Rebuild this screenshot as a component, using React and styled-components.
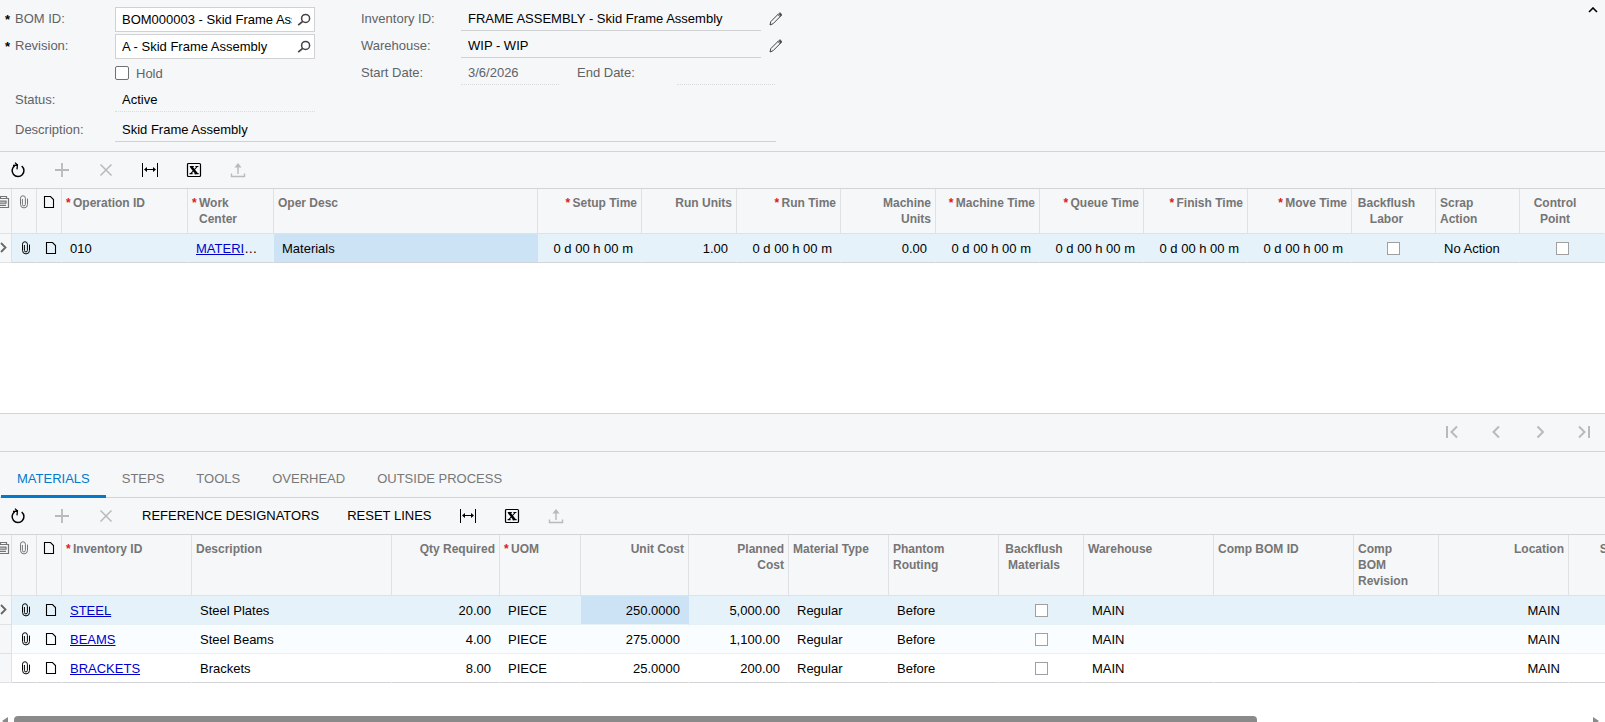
import styled, { createGlobalStyle, css } from 'styled-components'

const GlobalStyle = createGlobalStyle`
  * {
    box-sizing: border-box;
  }
  body {
    margin: 0;
    background: #fff;
    color: #000;
    font-family: "Liberation Sans", Arial, sans-serif;
    font-size: 13px;
  }
  button, input {
    font: inherit;
  }
`

const operationColumns = [
  { key: 'operation', label: 'Operation ID', width: 126, required: true },
  { key: 'workCenter', label: 'Work\nCenter', width: 86, required: true, link: true },
  { key: 'desc', label: 'Oper Desc', width: 264 },
  { key: 'setup', label: 'Setup Time', width: 104, required: true, align: 'right' },
  { key: 'runUnits', label: 'Run Units', width: 95, align: 'right' },
  { key: 'run', label: 'Run Time', width: 104, required: true, align: 'right' },
  { key: 'machineUnits', label: 'Machine\nUnits', width: 95, align: 'right' },
  { key: 'machine', label: 'Machine Time', width: 104, required: true, align: 'right' },
  { key: 'queue', label: 'Queue Time', width: 104, required: true, align: 'right' },
  { key: 'finish', label: 'Finish Time', width: 104, required: true, align: 'right' },
  { key: 'move', label: 'Move Time', width: 104, required: true, align: 'right' },
  { key: 'backflush', label: 'Backflush\nLabor', width: 84, align: 'center', check: true },
  { key: 'scrap', label: 'Scrap\nAction', width: 84 },
  { key: 'control', label: 'Control\nPoint', align: 'center', check: true },
]

const time = '0 d 00 h 00 m'

const operations = [
  {
    operation: '010', workCenter: 'MATERIALS', desc: 'Materials', setup: time, runUnits: '1.00', run: time,
    machineUnits: '0.00', machine: time, queue: time, finish: time, move: time, scrap: 'No Action',
  },
]

const materialColumns = [
  { key: 'inventory', label: 'Inventory ID', width: 130, required: true, link: true },
  { key: 'desc', label: 'Description', width: 200 },
  { key: 'qty', label: 'Qty Required', width: 108, align: 'right' },
  { key: 'uom', label: 'UOM', width: 81, required: true },
  { key: 'unitCost', label: 'Unit Cost', width: 108, align: 'right' },
  { key: 'plannedCost', label: 'Planned\nCost', width: 100, align: 'right' },
  { key: 'type', label: 'Material Type', width: 100 },
  { key: 'phantom', label: 'Phantom\nRouting', width: 110 },
  { key: 'backflush', label: 'Backflush\nMaterials', width: 85, align: 'center', check: true },
  { key: 'warehouse', label: 'Warehouse', width: 130 },
  { key: 'compBom', label: 'Comp BOM ID', width: 140 },
  { key: 'compRev', label: 'Comp\nBOM\nRevision', width: 85 },
  { key: 'location', label: 'Location', width: 130, align: 'right' },
  { key: 'scrapFactor', label: 'Scrap Factor', align: 'right' },
]

const common = { uom: 'PIECE', type: 'Regular', phantom: 'Before', warehouse: 'MAIN', location: 'MAIN' }

const materials = [
  { ...common, inventory: 'STEEL', desc: 'Steel Plates', qty: '20.00', unitCost: '250.0000', plannedCost: '5,000.00' },
  { ...common, inventory: 'BEAMS', desc: 'Steel Beams', qty: '4.00', unitCost: '275.0000', plannedCost: '1,100.00' },
  { ...common, inventory: 'BRACKETS', desc: 'Brackets', qty: '8.00', unitCost: '25.0000', plannedCost: '200.00' },
]

const tabs = ['MATERIALS', 'STEPS', 'TOOLS', 'OVERHEAD', 'OUTSIDE PROCESS']

/* icons */

const Svg = styled.svg`
  display: block;
  flex: none;
  fill: none;
  stroke: currentColor;
`

const SearchIcon = () => (
  <Svg width="14" height="14" viewBox="0 0 14 14" strokeWidth="1.5">
    <circle cx="8.6" cy="5.4" r="4" />
    <path d="M5.7 8.3L1.2 12.2" strokeWidth="1.7" />
  </Svg>
)

const PencilIcon = () => (
  <Svg width="14" height="14" viewBox="0 0 14 14" strokeWidth="1">
    <path d="M1 13l.8-3.4 7.9-7.9c.8-.8 1.7-.8 2.3-.2s.6 1.6-.2 2.4l-7.7 7.8zM9 2.6l2.3 2.3" />
    <path d="M10.4 1.6l2 2" strokeWidth="1.6" />
  </Svg>
)

const RefreshIcon = () => (
  <Svg width="16" height="16" viewBox="0 0 16 16" strokeWidth="1.5">
    <path d="M11.7 4A5.9 5.9 0 1 1 4.6 3.8" />
    <path d="M3 3.4l4.4-.2-.4 4.2M5 .6l2.6 2.6" strokeWidth="1.3" />
  </Svg>
)

const PlusIcon = () => (
  <Svg width="16" height="16" viewBox="0 0 16 16" strokeWidth="1.8">
    <path d="M8 1v14M1 8h14" />
  </Svg>
)

const CrossIcon = () => (
  <Svg width="16" height="16" viewBox="0 0 16 16" strokeWidth="1.5">
    <path d="M2.5 2.5l11 11M13.5 2.5l-11 11" />
  </Svg>
)

const FitIcon = () => (
  <Svg width="18" height="16" viewBox="0 0 18 16" strokeWidth="1">
    <path d="M1.5 1v14M16.5 1v14M4 7.5h10" />
    <path d="M3 7.5l3-2.5v5zM15 7.5l-3-2.5v5z" fill="currentColor" stroke="none" />
  </Svg>
)

const ExcelIcon = () => (
  <Svg width="16" height="16" viewBox="0 0 16 16" strokeWidth="1.2">
    <rect x="1.5" y="1.5" width="13" height="13" rx="1" />
    <path d="M5 4.5l5.6 7.2" strokeWidth="2.6" />
    <path d="M11.2 4.5l-6.4 7.2M3.8 4.5h4M9.4 4.5h3M3.6 11.6h3M8.6 11.6h4" strokeWidth="1.1" />
  </Svg>
)

const UploadIcon = () => (
  <Svg width="16" height="16" viewBox="0 0 16 16" strokeWidth="1.4">
    <path d="M1.5 11.5v3h13v-3M8 12V3" />
    <path d="M4.4 5.4L8 1l3.6 4.4z" fill="currentColor" stroke="none" />
  </Svg>
)

const ClipIcon = () => (
  <Svg width="10" height="14" viewBox="0 0 10 14" strokeWidth="1">
    <path d="M3.4 4v5.4a1.5 1.5 0 0 0 3 0V3.2a2.4 2.4 0 0 0-4.9 0v6.2a3.5 3.5 0 0 0 7 0V3.6" />
  </Svg>
)

const NoteIcon = () => (
  <Svg width="12" height="14" viewBox="0 0 12 14" strokeWidth="1.1">
    <path d="M1.5 1.5h6l3 3v8h-9z" />
  </Svg>
)

const SettingsIcon = () => (
  <Svg width="12" height="14" viewBox="0 0 12 14" strokeWidth="1.2">
    <path d="M0 3.5h2.5v-2h6v2h2v9H0M2.5 3.5h6M2 6.2h6v2H2M2 10.4h6" />
  </Svg>
)

const Chevron = ({ d, size = 16, weight = 2 }) => (
  <Svg width={size} height="16" viewBox={`0 0 ${size} 16`} strokeWidth={weight}>
    <path d={d} />
  </Svg>
)

/* form */

const Page = styled.div`
  display: flex;
  flex-direction: column;
  height: 100vh;
  overflow: hidden;
`

const Form = styled.form`
  display: flex;
  justify-content: space-between;
  flex: none;
  padding: 7px 2px 9px 5px;
  background: #f5f7f9;
  border-bottom: 1px solid #d2d4d7;
`

const FormBody = styled.div`
  display: flex;
  flex-direction: column;
  gap: 6px;
`

const FormColumns = styled.div`
  display: flex;
  gap: 46px;
`

const FormColumn = styled.div`
  display: flex;
  flex-direction: column;
  gap: 3px;
`

const FormRow = styled.div`
  display: grid;
  grid-template-columns: ${(p) => p.$columns || '110px 200px'};
  height: 24px;
`

const Label = styled.label`
  padding-left: ${(p) => (p.$indent ? 10 : 0)}px;
  line-height: 24px;
  color: #5f6368;
  white-space: nowrap;
`

const RequiredLabel = styled(Label)`
  display: grid;
  grid-template-columns: 10px auto;

  &::before {
    content: '*';
    padding-top: 1px;
    color: #000;
    font-weight: bold;
  }
`

const Lookup = styled.div`
  display: flex;
  align-items: center;
  gap: 2px;
  background: #fff;
  border: 1px solid #cfd1d3;
`

const LookupInput = styled.input`
  flex: 1;
  min-width: 0;
  height: 22px;
  padding: 0 0 0 6px;
  border: 0;
  outline: 0;
  background: none;
`

const IconButton = styled.button`
  display: flex;
  align-items: center;
  justify-content: center;
  width: ${(p) => p.$width || 20}px;
  padding: 0;
  border: 0;
  background: none;
  color: ${(p) => (p.$dark ? '#000' : '#444')};
`

const LineInput = styled.input`
  width: 100%;
  min-width: 0;
  height: 24px;
  padding: 0 7px;
  border: 0;
  border-bottom: 1px ${(p) => (p.$dotted ? 'dotted #d9dbde' : 'solid #cfd1d3')};
  outline: 0;
  background: none;
  color: ${(p) => (p.$muted ? '#5f6368' : '#000')};
`

const Check = styled.input.attrs({ type: 'checkbox' })`
  appearance: none;
  display: block;
  width: ${(p) => (p.$large ? 14 : 13)}px;
  height: ${(p) => (p.$large ? 14 : 13)}px;
  margin: ${(p) => (p.$large ? '0' : '0 auto')};
  background: #fff;
  border: 1px solid ${(p) => (p.$large ? '#707070' : '#a0a0a0')};
  border-radius: ${(p) => (p.$large ? 2 : 0)}px;
`

const Hold = styled.label`
  display: flex;
  align-items: center;
  grid-column: 2;
  gap: 7px;
  color: #5f6368;
`

/* toolbar, pager and tabs */

const Bar = styled.div`
  display: flex;
  flex: none;
  gap: 8px;
  height: 37px;
  background: #f5f7f9;
  border-bottom: 1px solid #d2d4d7;
`

const BarButton = styled.button`
  display: flex;
  align-items: center;
  justify-content: center;
  min-width: 36px;
  padding: ${(p) => (p.$text ? '0 10px 2px' : '0')};
  border: 0;
  background: none;
  color: #000;
  white-space: nowrap;

  &:disabled {
    color: #b8babd;
  }
`

const Pager = styled(Bar)`
  justify-content: flex-end;
  height: 39px;
  padding: 0 3px 2px 0;
  border-top: 1px solid #d2d4d7;
`

const TabList = styled.div`
  display: flex;
  align-items: flex-end;
  flex: none;
  height: 46px;
  padding-left: 1px;
  background: #f5f7f9;
  box-shadow: inset 0 -1px #d2d4d7;
`

const Tab = styled.button`
  height: 36px;
  padding: 0 16px;
  border: 0;
  border-bottom: 3px solid ${(p) => (p.$active ? '#027acc' : 'transparent')};
  background: none;
  color: ${(p) => (p.$active ? '#027acc' : '#777')};
`

/* grid */

const GridArea = styled.div`
  flex: ${(p) => (p.$fill ? '1 1 0' : 'none')};
  min-height: ${(p) => (p.$fill ? 0 : 224)}px;
  overflow: hidden;
`

const Table = styled.table`
  width: 100%;
  min-width: ${(p) => p.$minWidth}px;
  table-layout: fixed;
  border-spacing: 0;
`

const HeadCell = styled.th`
  padding: 6px 4px;
  vertical-align: top;
  background: #f5f7f9;
  border-right: 1px solid #dfe1e5;
  border-bottom: 1px solid #dfe1e5;
  color: #757575;
  font-size: 12px;
  line-height: 16px;

  &:last-child {
    border-right-color: transparent;
  }

  ${(p) => p.$icon && css`
    padding: 6px 0;
    color: ${p.$dark ? '#000' : '#757575'};

    svg {
      margin: ${p.$icon === 'edge' ? '0 0 0 -2px' : '0 auto'};
    }
  `}
`

const HeadLabel = styled.div`
  display: flex;
  justify-content: ${(p) => (p.$align === 'right' ? 'flex-end' : p.$align === 'center' ? 'center' : 'flex-start')};
  padding-right: ${(p) => (p.$align === 'center' ? 14 : 0)}px;
  text-align: ${(p) => p.$align || 'left'};
  white-space: pre;
`

const Star = styled.span`
  width: 7px;
  color: #d9211c;
  text-align: left;
`

const Cell = styled.td`
  height: 29px;
  padding: 0 8px;
  overflow: hidden;
  border-right: 1px solid transparent;
  border-bottom: 1px solid ${(p) => (p.$last ? '#d2d4d7' : '#e6f2f6')};
  background: ${(p) => (p.$selected ? '#cce3f5' : 'transparent')};
  text-align: ${(p) => p.$align || 'left'};
  text-overflow: ellipsis;
  white-space: nowrap;
`

const IconCell = styled(Cell)`
  padding: 0 0 0 3px;

  svg {
    margin: 0 auto;
  }
`

const MarkCell = styled(Cell)`
  padding: 0;
  background: #f5f7f9;
  border-right-color: #dfe1e5;
  border-bottom-color: #dfe1e5;
  color: #666;
`

const Row = styled.tr`
  background: ${(p) => (p.$active ? '#e5f2fa' : p.$tinted ? '#fafdff' : '#fff')};
`

const CellLink = styled.a`
  color: #0000cd;
`

const ScrollBar = styled.div`
  display: flex;
  flex: none;
  gap: 6px;
  height: 6px;
  padding: 0 6px 0 2px;
  overflow: hidden;
  color: #8a8a8a;
`

const Track = styled.div`
  flex: 1;
`

const Thumb = styled.div`
  width: 79%;
  height: 10px;
  background: #8a8a8a;
  border-radius: 4px;
`

function Grid({ name, columns, rows, minWidth, selected }) {
  return (
    <Table $minWidth={minWidth} aria-label={name}>
      <colgroup>
        <col width="12" />
        <col width="25" />
        <col width="25" />
        {columns.map((c) => <col key={c.key} width={c.width} />)}
      </colgroup>
      <thead>
        <tr>
          <HeadCell $icon="edge"><SettingsIcon /></HeadCell>
          <HeadCell $icon="center"><ClipIcon /></HeadCell>
          <HeadCell $icon="center" $dark><NoteIcon /></HeadCell>
          {columns.map((c) => (
            <HeadCell key={c.key} scope="col">
              <HeadLabel $align={c.align}>
                {c.required && <Star>*</Star>}
                <span>{c.label}</span>
              </HeadLabel>
            </HeadCell>
          ))}
        </tr>
      </thead>
      <tbody>
        {rows.map((row, i) => {
          const last = i === rows.length - 1
          return (
            <Row key={i} $active={i === 0} $tinted={i === 1}>
              <MarkCell $last={last}>
                {i === 0 && <Chevron size={10} weight={1.8} d="M1 3l4.5 4.5L1 12" />}
              </MarkCell>
              <IconCell $last={last}><ClipIcon /></IconCell>
              <IconCell $last={last}><NoteIcon /></IconCell>
              {columns.map((c) => (
                <Cell key={c.key} $align={c.align} $last={last} $selected={i === 0 && c.key === selected}>
                  {c.check && <Check aria-label={c.label} />}
                  {c.link ? <CellLink href="#">{row[c.key]}</CellLink> : row[c.key]}
                </Cell>
              ))}
            </Row>
          )
        })}
      </tbody>
    </Table>
  )
}

function Toolbar({ children }) {
  return (
    <Bar>
      <BarButton aria-label="Refresh"><RefreshIcon /></BarButton>
      <BarButton aria-label="Add row" disabled><PlusIcon /></BarButton>
      <BarButton aria-label="Delete row" disabled><CrossIcon /></BarButton>
      {children}
      <BarButton aria-label="Fit to screen"><FitIcon /></BarButton>
      <BarButton aria-label="Export to Excel"><ExcelIcon /></BarButton>
      <BarButton aria-label="Upload" disabled><UploadIcon /></BarButton>
    </Bar>
  )
}

function LookupField({ id, value }) {
  return (
    <Lookup>
      <LookupInput id={id} defaultValue={value} />
      <IconButton type="button" aria-label="Search"><SearchIcon /></IconButton>
    </Lookup>
  )
}

function BomForm() {
  return (
    <Form>
      <FormBody>
        <FormColumns>
          <FormColumn>
            <FormRow>
              <RequiredLabel htmlFor="bom">BOM ID:</RequiredLabel>
              <LookupField id="bom" value="BOM000003 - Skid Frame Assembly" />
            </FormRow>
            <FormRow>
              <RequiredLabel htmlFor="revision">Revision:</RequiredLabel>
              <LookupField id="revision" value="A - Skid Frame Assembly" />
            </FormRow>
            <FormRow>
              <Hold><Check $large />Hold</Hold>
            </FormRow>
            <FormRow>
              <Label $indent htmlFor="status">Status:</Label>
              <LineInput id="status" $dotted readOnly value="Active" />
            </FormRow>
          </FormColumn>
          <FormColumn>
            <FormRow $columns="100px 300px 30px">
              <Label htmlFor="inventory">Inventory ID:</Label>
              <LineInput id="inventory" defaultValue="FRAME ASSEMBLY - Skid Frame Assembly" />
              <IconButton type="button" $width={30} aria-label="Edit inventory item"><PencilIcon /></IconButton>
            </FormRow>
            <FormRow $columns="100px 300px 30px">
              <Label htmlFor="warehouse">Warehouse:</Label>
              <LineInput id="warehouse" defaultValue="WIP - WIP" />
              <IconButton type="button" $width={30} aria-label="Edit warehouse"><PencilIcon /></IconButton>
            </FormRow>
            <FormRow $columns="100px 98px 18px 100px 98px">
              <Label htmlFor="start">Start Date:</Label>
              <LineInput id="start" $dotted $muted readOnly value="3/6/2026" />
              <span />
              <Label htmlFor="end">End Date:</Label>
              <LineInput id="end" $dotted $muted readOnly value="" />
            </FormRow>
          </FormColumn>
        </FormColumns>
        <FormRow $columns="110px 661px">
          <Label $indent htmlFor="description">Description:</Label>
          <LineInput id="description" defaultValue="Skid Frame Assembly" />
        </FormRow>
      </FormBody>
      <div>
        <IconButton type="button" $dark aria-label="Collapse">
          <Svg width="10" height="6" viewBox="0 0 10 6" strokeWidth="1.6"><path d="M1 5l4-4 4 4" /></Svg>
        </IconButton>
      </div>
    </Form>
  )
}

export default function App() {
  return (
    <Page>
      <GlobalStyle />
      <BomForm />
      <Toolbar />
      <GridArea>
        <Grid name="Operations" columns={operationColumns} rows={operations} minWidth={1604} selected="desc" />
      </GridArea>
      <Pager>
        <BarButton disabled aria-label="First page"><Chevron d="M3 2v12M13 2.5L7.5 8l5.5 5.5" /></BarButton>
        <BarButton disabled aria-label="Previous page"><Chevron d="M11 2.5L5.5 8l5.5 5.5" /></BarButton>
        <BarButton disabled aria-label="Next page"><Chevron d="M5.5 2.5L11 8l-5.5 5.5" /></BarButton>
        <BarButton disabled aria-label="Last page"><Chevron d="M3 2.5L8.5 8 3 13.5M13 2v12" /></BarButton>
      </Pager>
      <TabList role="tablist">
        {tabs.map((tab, i) => (
          <Tab key={tab} role="tab" aria-selected={i === 0} $active={i === 0}>{tab}</Tab>
        ))}
      </TabList>
      <Toolbar>
        <BarButton $text>REFERENCE DESIGNATORS</BarButton>
        <BarButton $text>RESET LINES</BarButton>
      </Toolbar>
      <GridArea $fill>
        <Grid name="Materials" columns={materialColumns} rows={materials} minWidth={1678} selected="unitCost" />
      </GridArea>
      <ScrollBar>
        <Svg width="6" height="10" viewBox="0 0 6 10"><path d="M6 1v8L0 5z" fill="currentColor" stroke="none" /></Svg>
        <Track><Thumb /></Track>
        <Svg width="6" height="10" viewBox="0 0 6 10"><path d="M0 1v8l6-4z" fill="currentColor" stroke="none" /></Svg>
      </ScrollBar>
    </Page>
  )
}
